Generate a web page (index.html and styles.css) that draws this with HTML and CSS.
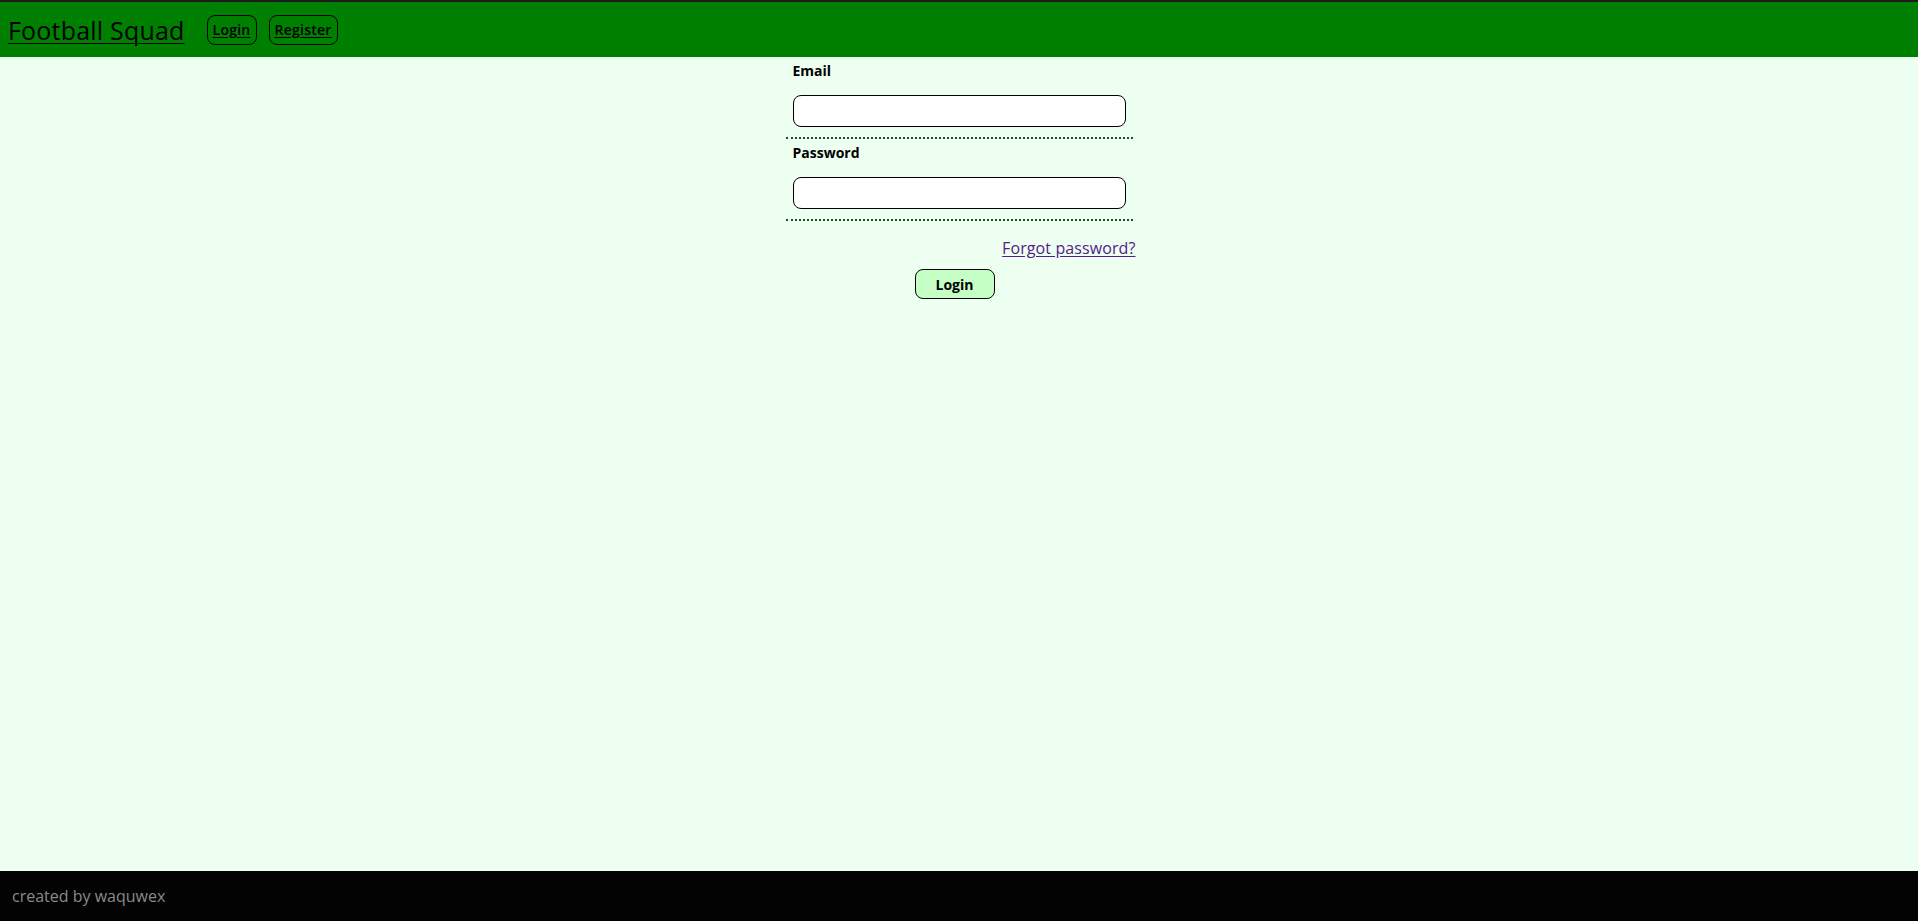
FILE: index.html
```html
<!DOCTYPE html>
<html lang="en">
<head>
<meta charset="utf-8">
<title>Football Squad</title>
<link rel="stylesheet" href="styles.css">
</head>
<body>
<header class="topbar">
  <a class="brand" href="#">Football Squad</a>
  <nav class="nav">
    <a class="nav-btn login-btn" href="#">Login</a>
    <a class="nav-btn" href="#">Register</a>
  </nav>
</header>
<main class="content">
  <form class="login-form">
    <div class="field">
      <label class="field-label" for="email">Email</label>
      <input class="field-input" id="email" type="email">
    </div>
    <div class="field">
      <label class="field-label" for="password">Password</label>
      <input class="field-input" id="password" type="password">
    </div>
    <div class="forgot-row"><a class="forgot" href="#">Forgot password?</a></div>
    <div class="submit-row"><button class="submit" type="button">Login</button></div>
  </form>
</main>
<footer class="footer">created by waquwex</footer>
</body>
</html>
```
FILE: styles.css
```css
* { box-sizing: border-box; }
html, body { height: 100%; }
body {
  margin: 0;
  min-height: 100vh;
  display: flex;
  flex-direction: column;
  background: #edfff0;
  font-family: "Open Sans", "Noto Sans", sans-serif;
  color: #000;
}
.topbar {
  height: 57px;
  border-top: 2px solid #1c1c1c;
  background: #008000;
  display: flex;
  align-items: center;
  padding-left: 8px;
  gap: 22px;
}
.brand {
  color: #000;
  font-size: 25px;
  font-weight: 500;
  letter-spacing: 0.2px;
  text-decoration: underline;
  text-decoration-thickness: 1px;
  text-underline-offset: 3px;
  line-height: 30px;
}
.nav { display: flex; gap: 12px; }
.nav-btn {
  height: 30px;
  display: flex;
  align-items: center;
  padding: 0 5px;
  border: 1px solid #000;
  border-radius: 8px;
  color: #000;
  font-size: 14px;
  font-weight: 600;
  letter-spacing: 0.25px;
  text-decoration: underline;
  text-underline-offset: 2px;
}
.content { flex: 1; }
.login-form {
  width: 347px;
  margin: 0 auto;
}
.field {
  padding: 4px 7px 10px 7px;
  border-bottom: 2px dotted #1e4d1e;
}
.field-label {
  display: block;
  font-size: 14px;
  font-weight: 700;
  line-height: 20px;
  margin-bottom: 14px;
}
.field-input {
  display: block;
  width: 100%;
  height: 32px;
  border: 1px solid #000;
  border-radius: 8px;
  background: #fff;
  font: inherit;
  padding: 0 8px;
}
.forgot-row {
  margin-top: 17px;
  text-align: right;
  line-height: 20px;
  margin-right: -3px;
}
.forgot {
  color: #551a8b;
  font-size: 16px;
  letter-spacing: 0.1px;
  text-decoration: underline;
  text-underline-offset: 2px;
}
.submit-row {
  margin-top: 11px;
  padding-left: 129px;
}
.submit {
  width: 80px;
  height: 30px;
  border: 1px solid #000;
  border-radius: 8px;
  background: #c6ffc6;
  font-family: inherit;
  font-size: 14px;
  font-weight: 700;
  color: #000;
}
.footer {
  height: 50px;
  background: #030303;
  color: #8a8a8a;
  font-size: 16px;
  display: flex;
  align-items: center;
  padding-left: 12px;
}
```
